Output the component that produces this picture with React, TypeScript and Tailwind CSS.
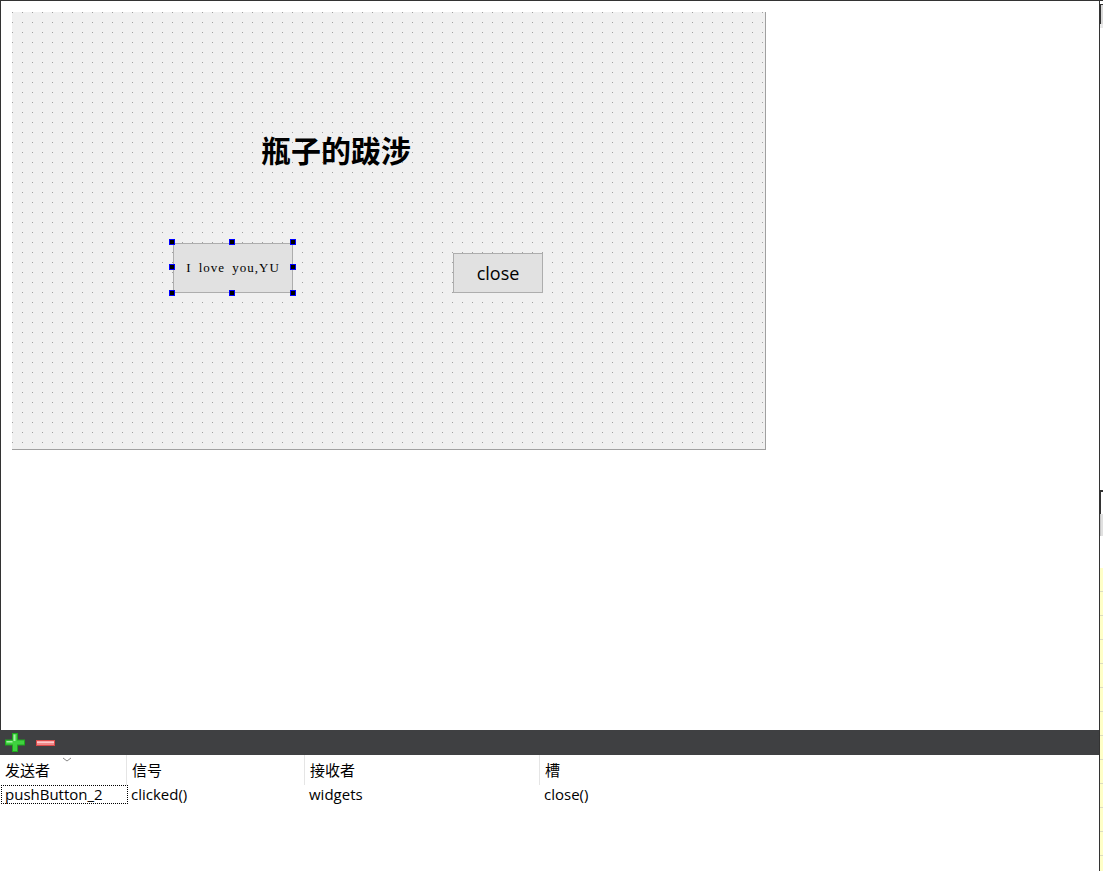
import React from 'react'

const ui = { fontFamily: '"Open Sans", "Noto Sans CJK SC", sans-serif' }
const cjk = { fontFamily: '"Noto Sans CJK SC", "Noto Sans", sans-serif' }

function Handle({ x, y }: { x: number; y: number }) {
  return (
    <div
      className="absolute w-[6px] h-[6px] bg-black border border-[#0000ff]"
      style={{ left: x - 3, top: y - 3 }}
    />
  )
}

function DesignCanvas() {
  const hx = [160, 220, 281]
  const hy = [230, 255, 281]
  return (
    <div className="relative w-[754px] h-[438px] bg-[#f0f0f0] border-r border-b border-[#a0a0a0]">
      <svg className="absolute inset-0" width="753" height="437">
        <defs>
          <pattern id="dots" width="10" height="10" patternUnits="userSpaceOnUse">
            <rect width="1" height="1" fill="#a0a0a0" />
          </pattern>
        </defs>
        <rect width="100%" height="100%" fill="url(#dots)" />
      </svg>

      <div className="absolute left-[249px] top-[122px] text-[30px] font-bold leading-none text-black" style={cjk}>
        瓶子的跋涉
      </div>

      <div
        className="absolute left-[161px] top-[231px] w-[120px] h-[50px] bg-[#e1e1e1] border border-[#adadad] flex items-center justify-center text-[13px] tracking-[1px] [word-spacing:3px] text-black"
        style={{ fontFamily: '"Liberation Serif", serif' }}
      >
        I love you,YU
      </div>
      {hy.map((y, i) =>
        hx.map((x, j) => (i === 1 && j === 1 ? null : <Handle key={`${i}-${j}`} x={x} y={y} />))
      )}

      <div
        className="absolute left-[441px] top-[241px] w-[90px] h-[40px] bg-[#e1e1e1] border border-[#adadad] flex items-center justify-center text-[18px] text-black"
        style={ui}
      >
        close
      </div>
    </div>
  )
}

function PlusIcon() {
  return (
    <svg width="20" height="19" viewBox="0 0 20 19">
      <path d="M7 0h6v6.5h7v6h-7V19H7v-6.5H0v-6h7z" fill="#1fa81f" />
      <path d="M8 1h4v6.5h7v4h-7V18H8v-6.5H1v-4h7z" fill="#3fd23f" />
      <path d="M8.5 1.5h2v6.5h-2zM1.5 8h6v1.5h-6z" fill="#a8f0a8" />
    </svg>
  )
}

function MinusIcon() {
  return (
    <svg width="19" height="6" viewBox="0 0 19 6">
      <rect width="19" height="6" fill="#d94a4a" />
      <rect x="1" y="1" width="17" height="4" fill="#f08a8a" />
      <rect x="1" y="1.5" width="17" height="1.5" fill="#fbcaca" />
    </svg>
  )
}

const cols = [
  { w: 'w-[127px]', head: '发送者', val: 'pushButton_2' },
  { w: 'w-[178px]', head: '信号', val: 'clicked()' },
  { w: 'w-[235px]', head: '接收者', val: 'widgets' },
  { w: 'w-[300px]', head: '槽', val: 'close()' },
]

function ConnectionTable() {
  return (
    <div className="flex-1 bg-white" style={ui}>
      <div className="flex h-[30px]">
        {cols.map((c, i) => (
          <div
            key={c.head}
            className={`${c.w} relative h-full flex items-center pl-[5px] text-[15px] text-black ${i < 3 ? 'border-r border-[#e5e5e5]' : ''}`}
          >
            <span style={cjk}>{c.head}</span>
            {i === 0 && (
              <svg className="absolute left-[62px] top-[2px]" width="10" height="5" viewBox="0 0 10 5">
                <path d="M1 1l4 3 4-3" stroke="#888" fill="none" />
              </svg>
            )}
          </div>
        ))}
      </div>
      <div className="flex h-[19px]">
        {cols.map((c, i) => (
          <div
            key={c.val}
            className={`${c.w} h-full flex items-center text-[15px] text-black ${
              i === 0 ? 'pl-[3px] border border-dotted border-black ml-[1px]' : 'pl-[3px]'
            }`}
          >
            {c.val}
          </div>
        ))}
      </div>
    </div>
  )
}

function SideStrip() {
  return (
    <div className="w-[3px] flex flex-col">
      <div className="h-[3px]" />
      <div className="h-[20px] bg-[#d8d8d8] border-t border-l border-[#333]" />
      <div className="h-[4px] bg-[#e8e8e8]" />
      <div className="h-[462px] bg-white" />
      <div className="h-[24px] border-t-2 border-l border-[#333] bg-white" />
      <div className="h-[22px] bg-[#e0e0e0] border-l border-[#c8c8c8]" />
      <div className="h-[32px] bg-white" />
      <div className="flex-1 bg-[#ffffc8] bg-[linear-gradient(#ffffc8_23px,#dcdcc0_23px)] bg-[size:3px_24px]" />
    </div>
  )
}

export default function App() {
  return (
    <div className="w-[1103px] h-[871px] flex flex-col border-t border-[#333] bg-white overflow-hidden">
      <div className="flex flex-1">
        <div className="w-[1099px] flex flex-col">
          <div className="h-[729px] border-l border-[#333] pt-[11px] pl-[11px]">
            <DesignCanvas />
          </div>
          <div className="h-[25px] bg-[#3f4042] flex items-center gap-[11px] pl-[5px]">
            <PlusIcon />
            <MinusIcon />
          </div>
          <ConnectionTable />
        </div>
        <div className="w-[1px] bg-[#333]" />
        <SideStrip />
      </div>
    </div>
  )
}
